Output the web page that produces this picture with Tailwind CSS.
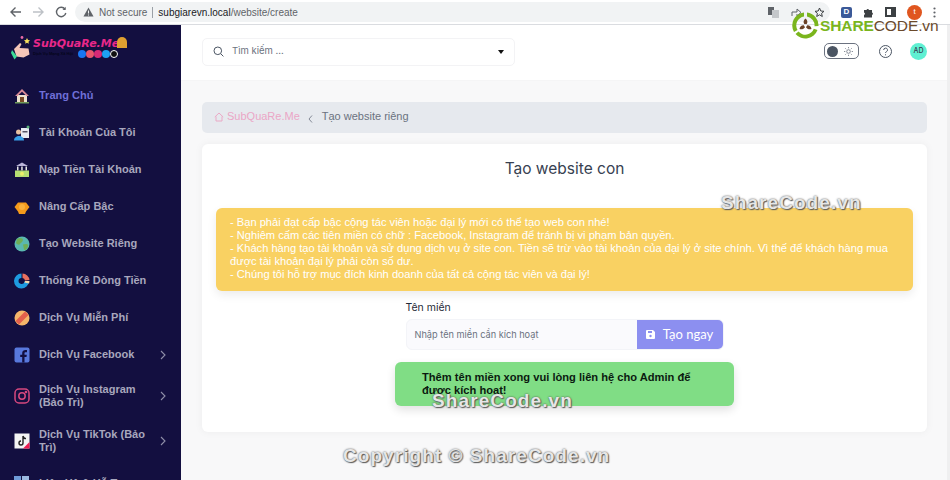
<!DOCTYPE html>
<html lang="en">
  <head>
    <meta charset="UTF-8" />
    <meta name="viewport" content="width=device-width, initial-scale=1.0" />
    <title>Tạo website con</title>
    <script src="https://cdn.jsdelivr.net/npm/@tailwindcss/browser@4"></script>
  </head>
  <body>
    <div class="relative h-[480px] w-[950px] overflow-hidden bg-white font-['Liberation_Sans',sans-serif]">

      <!-- browser bar -->
      <div class="flex h-[25px] items-center border-b border-[#dadce0] bg-white">
        <div class="flex w-[75px] items-center gap-[10px] pl-[9px]">
          <svg class="h-[12px] w-[13px]" viewBox="0 0 13 12" fill="none" stroke="#5f6368" stroke-width="1.4"><path d="M12 6H2M6.5 1.5 2 6l4.5 4.5"/></svg>
          <svg class="h-[12px] w-[13px]" viewBox="0 0 13 12" fill="none" stroke="#bdc1c6" stroke-width="1.4"><path d="M1 6h10M6.500 1.500 11 6l-4.500 4.500"/></svg>
          <svg class="h-[12px] w-[12px]" viewBox="0 0 12 12" fill="none" stroke="#5f6368" stroke-width="1.4"><path d="M10 3.200A4.700 4.700 0 1 0 10.800 7"/><path d="M10.700 .8v3.200H7.500" fill="#5f6368" stroke="none"/></svg>
        </div>
        <div class="flex h-[20px] w-[755px] items-center rounded-full bg-[#f1f3f4] pl-[8px] text-[10px] text-[#5f6368]">
          <svg class="h-[10px] w-[11px]" viewBox="0 0 11 10"><path d="M5.500 .5 10.500 9.500H.5z" fill="#5f6368"/><path d="M5.500 3.500v3M5.500 7.500v1" stroke="#f1f3f4"/></svg>
          <span class="ml-[5px]">Not secure</span>
          <span class="mx-[5px] h-[11px] w-px bg-[#9aa0a6]"></span>
          <span class="text-[#202124]">subgiarevn.local</span><span>/website/create</span>
          <div class="ml-auto mr-[5px] flex items-center gap-[12px]">
            <svg class="h-[11px] w-[11px]" viewBox="0 0 11 11"><rect width="6" height="8" fill="#5f6368"/><rect x="4" y="3" width="7" height="8" fill="#c4c7ca"/></svg>
            <svg class="h-[11px] w-[11px]" viewBox="0 0 11 11" fill="none" stroke="#5f6368"><path d="M1 9V5h5V2l4 3.500-4 3.500V7"/></svg>
            <svg class="h-[11px] w-[11px]" viewBox="0 0 11 11" fill="none" stroke="#3c4043"><path d="m5.500 1 1.300 3 3.200.3-2.400 2.100.7 3.100-2.800-1.700-2.800 1.700.7-3.100L1 4.300 4.200 4z"/></svg>
          </div>
        </div>
        <div class="ml-[11px] flex items-center gap-[11px]">
          <span class="flex h-[11px] w-[11px] items-center justify-center rounded-[2px] bg-[#3b5998] text-[8px] font-bold text-white">D</span>
          <svg class="h-[11px] w-[11px]" viewBox="0 0 11 11"><path d="M1 3h2.500a1.300 1.300 0 0 1 2.500 0H9v2.500a1.300 1.300 0 0 1 0 2.500V10.500H1V8a1.300 1.300 0 0 0 0-2.500z" fill="#3c4043"/></svg>
          <span class="h-[10px] w-[11px] border-[2px] border-r-[5px] border-[#3c4043]"></span>
          <span class="flex h-[15px] w-[15px] items-center justify-center rounded-full bg-[#e0561f] text-[8px] text-white">t</span>
          <svg class="h-[11px] w-[3px]" viewBox="0 0 3 11" fill="#5f6368"><circle cx="1.500" cy="1.500" r="1.100"/><circle cx="1.500" cy="5.500" r="1.100"/><circle cx="1.500" cy="9.500" r="1.100"/></svg>
        </div>
      </div>

      <div class="flex h-[455px]">
        <!-- sidebar -->
        <aside class="h-full w-[181px] shrink-0 overflow-hidden bg-[#130f40]">
          <div class="flex h-[50px] items-start pl-[11px] pt-[11px]">
            <svg class="h-[24px] w-[22px] shrink-0" viewBox="0 0 22 24"><circle cx="11" cy="1.500" r="1.400" fill="#e86aa6"/><path d="M3 13 9 7l1.500 1-2 4 9 .5 1 6-6 3-7-1z" fill="#f5c6b8"/><path d="M1 14l5 6.500-2.500 3L0 17z" fill="#3ddc97"/><path d="m16 2 1 2 2 .3-1.500 1.500.3 2-1.800-1-1.800 1 .3-2L13 4.300 15 4z" fill="#f6e05e"/></svg>
            <div class="w-[89px]">
              <div class="h-[14px] whitespace-nowrap pt-[1px] text-[11px] font-bold italic leading-[13px] text-[#e8288a] font-['DejaVu_Sans',sans-serif]">SubQuaRe.Me</div>
              <div class="flex items-center">
                <span class="w-[45px] whitespace-nowrap text-[4px] font-bold text-[#05051a]">Dịch Vụ Mạng Xã Hội</span>
                <span class="flex">
                  <span class="h-[8px] w-[8px] rounded-full bg-[#1877f2]"></span>
                  <span class="h-[8px] w-[8px] rounded-full bg-[#e8566c]"></span>
                  <span class="h-[8px] w-[8px] rounded-full bg-[#d62976]"></span>
                  <span class="h-[8px] w-[8px] rounded-full bg-[#1da1f2]"></span>
                  <span class="h-[8px] w-[8px] rounded-full border border-white bg-[#111]"></span>
                </span>
              </div>
            </div>
            <span class="-ml-[5px] mt-[1px] h-[11px] w-[10px] rounded-t-full bg-[#e0a030]"></span>
          </div>

          <nav class="mt-[2px] text-[11px] font-bold text-[#a8a7bd]">
            <a class="flex h-[37px] items-center pl-[14px] text-[#6f6fd8]">
              <svg class="mr-[9px] h-[16px] w-[16px] shrink-0" viewBox="0 0 16 16"><rect x="3" y="7" width="10" height="7" fill="#efe3cf"/><path d="M8 1 1 8h2.500L8 3.800 12.500 8H15z" fill="#d98a96"/><rect x="6" y="9" width="4" height="5" fill="#7a4a26"/><rect x="1" y="14" width="14" height="1.500" fill="#6f9a5a"/></svg>
              Trang Chủ
            </a>
            <a class="flex h-[37px] items-center pl-[14px]">
              <svg class="mr-[9px] h-[16px] w-[16px] shrink-0" viewBox="0 0 16 16"><rect x="7" y="3" width="8" height="10" fill="#e6ebf2"/><rect x="8.500" y="6" width="5" height="1.500" fill="#556"/><circle cx="14" cy="2" r="1.500" fill="#58b07a"/><circle cx="4.500" cy="7" r="2.500" fill="#e9c1a1"/><path d="M0 15.500c0-6 10-6 10 0z" fill="#3aa0e8"/></svg>
              Tài Khoản Của Tôi
            </a>
            <a class="flex h-[37px] items-center pl-[14px]">
              <svg class="mr-[9px] h-[16px] w-[16px] shrink-0" viewBox="0 0 16 16"><path d="M8 .5 14 4H2z" fill="#b9b3d8"/><rect x="3" y="4.500" width="1.500" height="4" fill="#e8e8e8"/><rect x="7.200" y="4.500" width="1.500" height="4" fill="#e8e8e8"/><rect x="11.500" y="4.500" width="1.500" height="4" fill="#e8e8e8"/><rect x="1" y="8.500" width="14" height="6.500" fill="#b5dd72"/><circle cx="8" cy="11.700" r="2" fill="#ecef6a"/></svg>
              Nạp Tiền Tài Khoản
            </a>
            <a class="flex h-[37px] items-center pl-[14px]">
              <svg class="mr-[9px] h-[16px] w-[16px] shrink-0" viewBox="0 0 16 16"><path d="M.5 8 4 3.500h8L15.500 8 12 12.500 11 15H5l-1-2.500z" fill="#f59a1b"/><circle cx="8" cy="8" r="3" fill="#fbb13c"/></svg>
              Nâng Cấp Bậc
            </a>
            <a class="flex h-[37px] items-center pl-[14px]">
              <svg class="mr-[9px] h-[16px] w-[16px] shrink-0" viewBox="0 0 16 16"><circle cx="8" cy="8" r="7.500" fill="#5ab8b0"/><path d="M3 3c3-2 6-1 6 1s-3 3-3 4-3 1-4-1zM9 8.500c3-1 6-1 5 2s-3 4-4 3z" fill="#6fae55"/></svg>
              Tạo Website Riêng
            </a>
            <a class="flex h-[37px] items-center pl-[14px]">
              <svg class="mr-[9px] h-[16px] w-[16px] shrink-0" viewBox="0 0 16 16"><path d="M7.500 .5a7.500 7.500 0 1 0 7.500 8h-4.500a3 3 0 1 1-3-3.500z" fill="#1e9be0"/><path d="M8.500 .5A7.500 7.500 0 0 1 15.500 7l-4.500.5a3 3 0 0 0-2.500-2.500z" fill="#e8705f"/><path d="M11 8h4.500a7 7 0 0 1-.5 2.500l-4.500-1z" fill="#f2d6a8"/></svg>
              Thống Kê Dòng Tiền
            </a>
            <a class="flex h-[37px] items-center pl-[14px]">
              <svg class="mr-[9px] h-[16px] w-[16px] shrink-0" viewBox="0 0 16 16"><circle cx="8" cy="8" r="7.500" fill="#f5b66a"/><path d="M1.500 11 11 1.500 14.500 5 5 14.500z" fill="#e2604c"/></svg>
              Dịch Vụ Miễn Phí
            </a>
            <a class="flex h-[37px] items-center pl-[14px]">
              <svg class="mr-[9px] h-[16px] w-[16px] shrink-0" viewBox="0 0 16 16"><rect width="15" height="15" x=".5" y=".5" rx="2" fill="#5878dc"/><path d="M10.500 15.500V10h2l.3-2.300h-2.300V6.300c0-.7.2-1.100 1.100-1.100H13V3.100c-2.800-.4-4.800.3-4.800 3v1.600h-2V10h2v5.500z" fill="#130f40"/></svg>
              Dịch Vụ Facebook
              <svg class="ml-auto mr-[15px] h-[10px] w-[6px]" viewBox="0 0 6 10" fill="none" stroke="#8f8ea8" stroke-width="1.100"><path d="m1 1 4 4-4 4"/></svg>
            </a>
            <a class="flex h-[46px] items-center pl-[14px] leading-[13px]">
              <svg class="mr-[9px] h-[16px] w-[16px] shrink-0" viewBox="0 0 16 16" fill="none" stroke="#d6487e" stroke-width="1.500"><rect x="1" y="1" width="14" height="14" rx="4"/><circle cx="8" cy="8" r="3.200"/><circle cx="12" cy="4" r=".6" fill="#d6487e"/></svg>
              <span class="w-[110px]">Dịch Vụ Instagram (Bảo Trì)</span>
              <svg class="ml-auto mr-[15px] h-[10px] w-[6px]" viewBox="0 0 6 10" fill="none" stroke="#8f8ea8" stroke-width="1.100"><path d="m1 1 4 4-4 4"/></svg>
            </a>
            <a class="flex h-[44px] items-center pl-[14px] leading-[13px]">
              <svg class="mr-[9px] h-[16px] w-[16px] shrink-0" viewBox="0 0 16 16"><rect width="15" height="15" x=".5" y=".5" fill="#f4f4f4"/><path d="M9 3v7a2 2 0 1 1-2-2M9 3c.3 1.600 1.400 2.500 3 2.600" fill="none" stroke="#222" stroke-width="1.400"/><path d="M9 15.500 15.500 15.500 15.500 9z" fill="#ee1d52"/></svg>
              <span class="w-[110px]">Dịch Vụ TikTok (Bảo Trì)</span>
              <svg class="ml-auto mr-[15px] h-[10px] w-[6px]" viewBox="0 0 6 10" fill="none" stroke="#8f8ea8" stroke-width="1.100"><path d="m1 1 4 4-4 4"/></svg>
            </a>
            <a class="mt-[2px] flex h-[37px] items-center pl-[14px]">
              <svg class="mr-[9px] h-[16px] w-[16px] shrink-0" viewBox="0 0 16 16"><rect width="7" height="7" fill="#6f9bd8"/><rect x="8" width="7" height="7" fill="#9bb9e0"/></svg>
              Liên Hệ & Hỗ Trợ
            </a>
          </nav>
        </aside>

        <!-- main -->
        <main class="min-w-0 flex-1 bg-[#f8f8f9]">
          <div class="flex h-[56px] items-center border-b border-[#f5f5f6] bg-white pl-[21px] pr-[20px]">
            <div class="mb-[2px] flex h-[28px] w-[313px] items-center rounded-[5px] border border-[#f3f3f5] bg-white pl-[10px] pr-[10px] text-[9.500px] text-[#6b7280] font-['Inter',sans-serif]">
              <svg class="mr-[8px] h-[11px] w-[11px]" viewBox="0 0 11 11" fill="none" stroke="#4b5563"><circle cx="4.800" cy="4.800" r="3.800"/><path d="m7.800 7.800 2.600 2.600"/></svg>
              Tìm kiếm ...
              <span class="ml-auto h-0 w-0 border-x-[3px] border-t-[4px] border-x-transparent border-t-[#111]"></span>
            </div>
            <div class="mb-[3px] ml-auto flex items-center">
              <div class="flex h-[16px] w-[35px] items-center rounded-[5px] border border-[#6b7280] pl-[2px]">
                <span class="h-[11px] w-[11px] rounded-full bg-[#4b5563]"></span>
                <svg class="ml-[6px] h-[9px] w-[9px]" viewBox="0 0 9 9" fill="none" stroke="#6b7280" stroke-width=".8"><circle cx="4.500" cy="4.500" r="1.800"/><path d="M4.500 0v1.300M4.500 7.700V9M0 4.500h1.300M7.700 4.500H9M1.300 1.300l.9.9M6.800 6.800l.9.9M1.300 7.700l.9-.9M6.800 2.200l.9-.9"/></svg>
              </div>
              <svg class="ml-[20px] h-[13px] w-[13px]" viewBox="0 0 13 13" fill="none" stroke="#4b5563"><circle cx="6.500" cy="6.500" r="6"/><path d="M4.700 5a1.900 1.900 0 1 1 2.700 1.700c-.6.300-.9.700-.9 1.300M6.500 9.300v1"/></svg>
              <span class="ml-[18px] flex h-[17px] w-[17px] items-center justify-center rounded-full bg-[#5ff0d2] text-[7px] font-medium text-[#374151] font-['Inter',sans-serif]">AD</span>
            </div>
          </div>

          <div class="pl-[21px] pr-[20px] pt-[21px]">
            <div class="flex h-[31px] items-center rounded-[5px] bg-[#e6e9ee] pb-[2px] pl-[12px] text-[11px]">
              <svg class="mr-[3px] h-[10px] w-[10px]" viewBox="0 0 10 10" fill="none" stroke="#eaa9c6"><path d="M.8 5 5 1l4.200 4M2 4.500V9h6V4.500"/></svg>
              <span class="text-[#eba6c6]">SubQuaRe.Me</span>
              <svg class="ml-[8px] mr-[9px] mt-[4px] h-[8px] w-[5px]" viewBox="0 0 5 8" fill="none" stroke="#6b7280" stroke-width=".8"><path d="M4 .5 1 4l3 3.500"/></svg>
              <span class="text-[#6b7280]">Tạo website riêng</span>
            </div>

            <section class="mt-[11px] flex h-[288px] flex-col items-center rounded-[6px] bg-white shadow-[0_0_8px_rgba(0,0,0,0.05)] font-['Inter',sans-serif]">
              <h1 class="mt-[15px] text-[15.500px] leading-[20px] text-[#374151]">Tạo website con</h1>
              <div class="mt-[29px] w-[697px] rounded-[6px] bg-[#f9d162] pb-[10px] pl-[14px] pr-[15px] pt-[8px] text-[11.130px] leading-[13px] text-white shadow-[0_4px_10px_rgba(0,0,0,0.08)] font-['Liberation_Sans',sans-serif]">
                - Bạn phải đạt cấp bậc cộng tác viên hoặc đại lý mới có thể tạo web con nhé!<br />
                - Nghiêm cấm các tiên miền có chữ : Facebook, Instagram để tránh bị vi phạm bản quyền.<br />
                - Khách hàng tạo tài khoản và sử dụng dịch vụ ở site con. Tiền sẽ trừ vào tài khoản của đại lý ở site chính. Vì thế để khách hàng mua được tài khoản đại lý phải còn số dư.<br />
                - Chúng tôi hỗ trợ mục đích kinh doanh của tất cả cộng tác viên và đại lý!
              </div>
              <div class="mt-[10px] w-[318px]">
                <div class="text-[10.500px] leading-[14px] text-[#1f2937]">Tên miền</div>
                <div class="mt-[4px] flex h-[31px] overflow-hidden rounded-[6px] border border-[#f3f4f8] bg-[#fafafd]">
                  <span class="flex flex-1 items-center pl-[8px] text-[9.200px] text-[#6b7280]">Nhập tên miền cần kích hoạt</span>
                  <span class="flex w-[86px] items-center justify-center gap-[8px] bg-[#8c8ff0] text-[13px] text-white font-['Lato',sans-serif]">
                    <svg class="h-[9px] w-[9px]" viewBox="0 0 9 9"><path d="M0 1a1 1 0 0 1 1-1h6l2 2v6a1 1 0 0 1-1 1H1a1 1 0 0 1-1-1z" fill="#fff"/><rect x="2" y="1" width="4" height="2" fill="#8c8ff0"/><circle cx="4.500" cy="6" r="1.200" fill="#8c8ff0"/></svg>
                    Tạo ngay
                  </span>
                </div>
              </div>
              <div class="mt-[12px] h-[44px] w-[339px] rounded-[6px] bg-[#80dd85] pl-[27px] pr-[30px] pt-[9px] text-[11.130px] font-bold leading-[13px] text-[#0b1a10] shadow-[0_4px_10px_rgba(0,0,0,0.12)] font-['Liberation_Sans',sans-serif]">
                Thêm tên miền xong vui lòng liên hệ cho Admin để được kích hoạt!
              </div>
            </section>
          </div>
        </main>
        <div class="w-[3px] shrink-0 bg-[#efeff0]"></div>
      </div>

      <!-- watermarks -->
      <div class="absolute left-[792px] top-[12px] flex items-center">
        <svg class="h-[27px] w-[27px]" viewBox="0 0 27 27">
          <path d="M12 .5A13 13 0 0 0 2 20l3.500-2A9 9 0 0 1 12 4.500z" fill="#7ab51d"/>
          <path d="M3.500 22A13 13 0 0 0 25.500 18l-3.700-1.300A9 9 0 0 1 6.500 19.500z" fill="#7ab51d"/>
          <path d="M15 .5A13 13 0 0 1 26.500 14l-4 .3A9 9 0 0 0 15 4.500z" fill="#7ab51d"/>
          <path d="M13.500 6.500c2 1.500 2.500 4 1.200 5.500h-2.400C11 10.500 11.500 8 13.500 6.500zM7.500 17c.3-2.500 2.300-4.200 4.300-3.800l1.200 2.100c-1 1.800-3.500 2.600-5.500 1.700zM19.500 17c-2 .9-4.500.1-5.500-1.700l1.200-2.100c2-.4 4 1.300 4.300 3.800z" fill="#6b4226"/>
        </svg>
        <span class="ml-[1px] text-[15.500px] font-bold leading-[24px] tracking-[-.1px] text-[#7ab51d]">SHARE</span><span class="text-[15.500px] leading-[24px] tracking-[-.1px] text-[#6b4a2b]">CODE.vn</span>
      </div>
      <div class="absolute left-[721px] top-[191px] text-[19px] font-bold leading-[24px] tracking-[1.07px] text-[#e6e6e6] [text-shadow:0_0_2px_#444,1px_1px_1px_#666]">ShareCode.vn</div>
      <div class="absolute left-[432px] top-[389px] text-[19px] font-bold leading-[24px] tracking-[1.1px] text-[#e6e6e6] [text-shadow:0_0_2px_#444,1px_1px_1px_#666]">ShareCode.vn</div>
      <div class="absolute left-[343px] top-[444px] text-[19px] font-bold leading-[24px] tracking-[1.05px] text-[#e6e6e6] [text-shadow:0_0_2px_#444,1px_1px_1px_#666]">Copyright © ShareCode.vn</div>
    </div>
  </body>
</html>
